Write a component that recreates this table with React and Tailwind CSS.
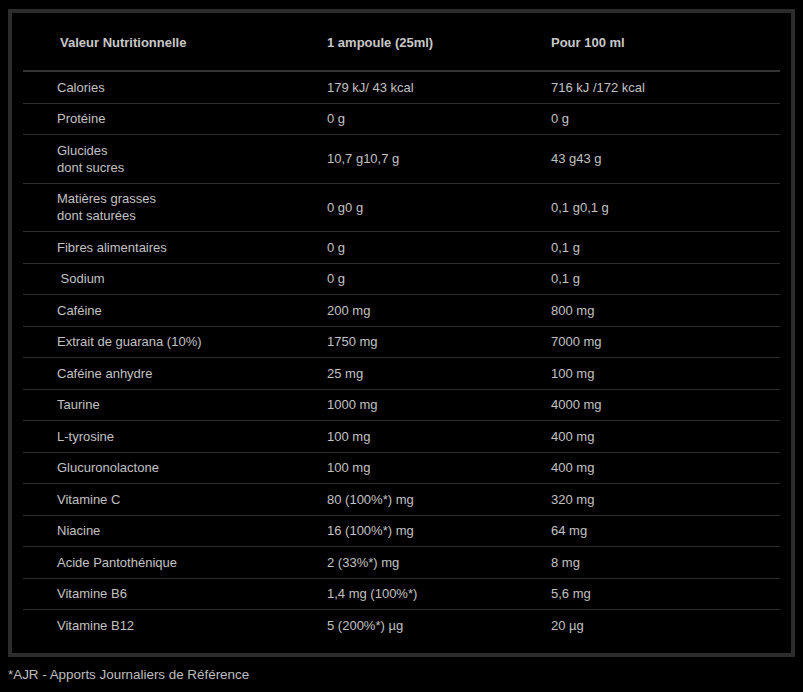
import React from "react";

const rows = [
  { name: ["Calories"], dose: "179 kJ/ 43 kcal", per100: "716 kJ /172 kcal" },
  { name: ["Protéine"], dose: "0 g", per100: "0 g" },
  { name: ["Glucides", "dont sucres"], dose: "10,7 g10,7 g", per100: "43 g43 g" },
  { name: ["Matières grasses", "dont saturées"], dose: "0 g0 g", per100: "0,1 g0,1 g" },
  { name: ["Fibres alimentaires"], dose: "0 g", per100: "0,1 g" },
  { name: ["\u00a0Sodium"], dose: "0 g", per100: "0,1 g" },
  { name: ["Caféine"], dose: "200 mg", per100: "800 mg" },
  { name: ["Extrait de guarana (10%)"], dose: "1750 mg", per100: "7000 mg" },
  { name: ["Caféine anhydre"], dose: "25 mg", per100: "100 mg" },
  { name: ["Taurine"], dose: "1000 mg", per100: "4000 mg" },
  { name: ["L-tyrosine"], dose: "100 mg", per100: "400 mg" },
  { name: ["Glucuronolactone"], dose: "100 mg", per100: "400 mg" },
  { name: ["Vitamine C"], dose: "80 (100%*) mg", per100: "320 mg" },
  { name: ["Niacine"], dose: "16 (100%*) mg", per100: "64 mg" },
  { name: ["Acide Pantothénique"], dose: "2 (33%*) mg", per100: "8 mg" },
  { name: ["Vitamine B6"], dose: "1,4 mg (100%*)", per100: "5,6 mg" },
  { name: ["Vitamine B12"], dose: "5 (200%*) µg", per100: "20 µg" },
];

const App = () => {
  return (
    <div className="min-h-screen bg-black pt-[9px] pl-[8px] text-[13px] text-[#c2c2c2] font-['Liberation_Sans',Arial,sans-serif]">
      {/* Table box */}
      <div className="w-[787px] border-4 border-[#2c2c2c] px-[11px] pb-[12px]">
        {/* Header */}
        <div className="grid grid-cols-[304px_224px_1fr] items-center h-[59px] border-b-2 border-[#333333] font-bold text-[#c8c8c8] text-[13px] pt-[2px]">
          <div className="pl-[37px]">Valeur Nutritionnelle</div>
          <div>1 ampoule (25ml)</div>
          <div>Pour 100 ml</div>
        </div>

        {/* Rows */}
        {rows.map((r, i) => (
          <div
            key={i}
            className={`grid grid-cols-[304px_224px_1fr] items-center leading-[17px] py-[6.75px] ${
              i < rows.length - 1 ? "border-b border-[#2e2e2e]" : ""
            }`}
          >
            <div className="pl-[34px]">
              {r.name.map((n, j) => (
                <div key={j}>{n}</div>
              ))}
            </div>
            <div>{r.dose}</div>
            <div>{r.per100}</div>
          </div>
        ))}
      </div>

      <p className="mt-[9px] leading-[17px] text-[13.4px] text-[#bdbdbd]">
        *AJR - Apports Journaliers de Référence
      </p>
    </div>
  );
};

export default App;
